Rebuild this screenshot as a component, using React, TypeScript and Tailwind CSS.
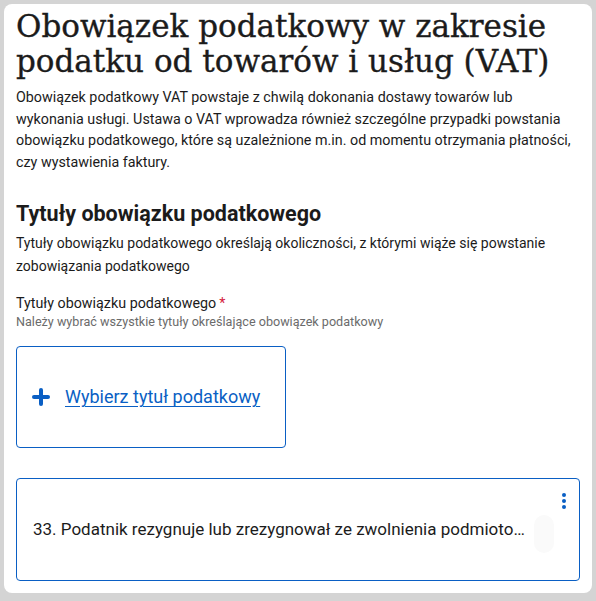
import { Plus } from "lucide-react"

export default function App() {
  return (
    <div className="min-h-[601px] bg-[#d4d4d4] p-1" style={{ fontFamily: "Roboto, 'Liberation Sans', sans-serif" }}>
      <div className="rounded-lg bg-white px-3 pb-3 pt-[5px] text-[#1b1b1b]">
        <h1 className="font-['DejaVu_Serif',serif] text-[31px] leading-[35px] text-[#1b1b1b] [-webkit-text-stroke:0.35px_#1b1b1b]">
          Obowiązek podatkowy w zakresie podatku od towarów i usług (VAT)
        </h1>
        <p className="mt-[8px] text-[14.3px] leading-[21.7px]">
          Obowiązek podatkowy VAT powstaje z chwilą dokonania dostawy towarów lub wykonania usługi. Ustawa o VAT
          wprowadza również szczególne przypadki powstania obowiązku podatkowego, które są uzależnione m.in. od momentu
          otrzymania płatności, czy wystawienia faktury.
        </p>

        <h2 className="mt-[26px] text-[21.5px] font-bold leading-[28px]">Tytuły obowiązku podatkowego</h2>
        <p className="mt-[4px] text-[14px] leading-[23px]">
          Tytuły obowiązku podatkowego określają okoliczności, z którymi wiąże się powstanie zobowiązania podatkowego
        </p>

        <div className="mt-[15px]">
          <div className="text-[14.3px] leading-[20px]">
            Tytuły obowiązku podatkowego<span className="ml-[3px] text-[#d4213d]">*</span>
          </div>
          <div className="text-[12.6px] leading-[18px] text-[#6b6b6b]">
            Należy wybrać wszystkie tytuły określające obowiązek podatkowy
          </div>
        </div>

        <button className="mt-[15px] flex h-[102px] w-[270px] items-center gap-[12px] rounded-[4px] border border-[#0a5fc4] bg-white pl-[12px] text-left">
          <Plus className="h-[24px] w-[24px] text-[#0a5fc4]" strokeWidth={4} />
          <span className="text-[18px] text-[#0a5fc4] underline underline-offset-[3px]">Wybierz tytuł podatkowy</span>
        </button>

        <div className="relative mt-[30px] flex h-[103px] items-center rounded-[4px] border border-[#0a5fc4] pl-[16px] pr-[50px]">
          <div className="absolute right-[25px] top-[36px] h-[38px] w-[20px] rounded-full bg-[#fafafa]" />
          <span className="relative truncate text-[17px] text-[#1b1b1b]">
            33. Podatnik rezygnuje lub zrezygnował ze zwolnienia podmiotowego w podatku od towarów i usług
          </span>
          <div className="absolute right-[13px] top-[14px] flex flex-col gap-[2px]">
            <span className="h-[4px] w-[4px] rounded-full bg-[#0a5fc4]" />
            <span className="h-[4px] w-[4px] rounded-full bg-[#0a5fc4]" />
            <span className="h-[4px] w-[4px] rounded-full bg-[#0a5fc4]" />
          </div>
        </div>
      </div>
    </div>
  )
}
